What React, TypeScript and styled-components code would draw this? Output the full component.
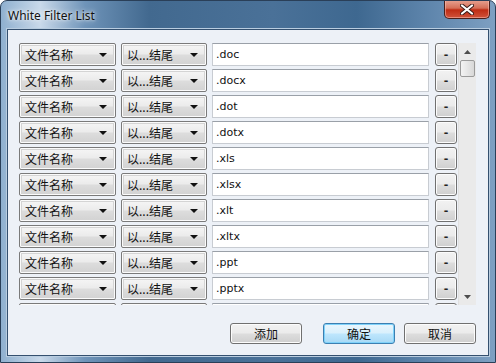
import styled, { createGlobalStyle } from "styled-components";

const GlobalStyle = createGlobalStyle`
  html, body {
    margin: 0;
    padding: 0;
    background: #ffffff;
  }
  body {
    font-family: "Noto Sans", "Noto Sans CJK SC", sans-serif;
  }
`;

const extensions = [".doc", ".docx", ".dot", ".dotx", ".xls", ".xlsx", ".xlt", ".xltx", ".ppt", ".pptx"];

const App = () => {
  return (
    <>
      <GlobalStyle />
      <Window>
        <TitleBar>
          <Title>White Filter List</Title>
          <CloseButton>
            <svg width="14" height="11" viewBox="0 0 14 11">
              <path d="M2 1.5 L12 9.5 M12 1.5 L2 9.5" stroke="#3a1b18" strokeWidth="4" strokeLinecap="round" />
              <path d="M2 1.5 L12 9.5 M12 1.5 L2 9.5" stroke="#ffffff" strokeWidth="2.2" strokeLinecap="round" />
            </svg>
          </CloseButton>
        </TitleBar>
        <Client>
          <ListPanel>
            <Rows>
              {extensions.map((ext, i) => (
                <Row key={i}>
                  <Combo $width={97}>
                    <ComboText>文件名称</ComboText>
                    <Arrow />
                  </Combo>
                  <Combo $width={86}>
                    <ComboText>以...结尾</ComboText>
                    <Arrow />
                  </Combo>
                  <TextBox>{ext}</TextBox>
                  <MinusButton>-</MinusButton>
                </Row>
              ))}
              {/* next row, scrolled out of view except its top edge */}
              <Row>
                <Combo $width={97}>
                  <ComboText />
                </Combo>
                <Combo $width={86}>
                  <ComboText />
                </Combo>
                <TextBox />
                <MinusButton />
              </Row>
            </Rows>
            <ScrollBar>
              <ScrollArrow>
                <svg width="7" height="4" viewBox="0 0 7 4">
                  <path d="M0 4 L3.5 0 L7 4 Z" fill="#4d4d4d" />
                </svg>
              </ScrollArrow>
              <Thumb />
              <Track />
              <ScrollArrow>
                <svg width="7" height="4" viewBox="0 0 7 4">
                  <path d="M0 0 L3.5 4 L7 0 Z" fill="#4d4d4d" />
                </svg>
              </ScrollArrow>
            </ScrollBar>
          </ListPanel>
          <Footer>
            <DialogButton $spaced>添加</DialogButton>
            <DialogButton $primary>确定</DialogButton>
            <DialogButton>取消</DialogButton>
          </Footer>
        </Client>
      </Window>
    </>
  );
};

export default App;

const Window = styled.div`
  width: 496px;
  height: 363px;
  box-sizing: border-box;
  display: flex;
  flex-direction: column;
  border-radius: 7px 7px 0 0;
  border: 1px solid #2a3f58;
  background: linear-gradient(
    90deg,
    #8fb0cf 0%,
    #c9d9ea 8%,
    #6f94b9 17%,
    #42698f 30%,
    #4a7198 55%,
    #3e6890 72%,
    #5d84ab 86%,
    #7ea0c2 100%
  );
  overflow: hidden;
`;

const TitleBar = styled.div`
  height: 28px;
  display: flex;
  align-items: flex-start;
  justify-content: space-between;
  padding: 0 5px 0 7px;
`;

const Title = styled.div`
  margin-top: 6px;
  font-family: "Noto Sans", "DejaVu Sans", sans-serif;
  font-size: 12px;
  color: #111;
  text-shadow: 0 0 6px rgba(255, 255, 255, 0.9), 0 0 3px rgba(255, 255, 255, 0.9);
`;

const CloseButton = styled.div`
  width: 46px;
  height: 19px;
  margin-top: -1px;
  box-sizing: border-box;
  border: 1px solid #4a1f1a;
  border-top: none;
  border-radius: 0 0 5px 5px;
  background: linear-gradient(180deg, #e8a493 0%, #d56f58 45%, #bf2c14 55%, #d0533b 100%);
  box-shadow: inset 0 0 0 1px rgba(255, 200, 190, 0.5);
  display: flex;
  align-items: center;
  justify-content: center;
`;

const Client = styled.div`
  flex: 1;
  margin: 0 6px 6px 6px;
  border: 1px solid #34506f;
  background: #edf1f7;
  display: flex;
  flex-direction: column;
  padding: 13px 12px 0 11px;
  box-shadow: 0 0 0 1px #b9cde0;
`;

const ListPanel = styled.div`
  height: 262px;
  display: flex;
  overflow: hidden;
`;

const Rows = styled.div`
  flex: 1;
  display: flex;
  flex-direction: column;
  gap: 3px;
  overflow: hidden;
`;

const Row = styled.div`
  display: flex;
  align-items: center;
  flex-shrink: 0;
  height: 23px;
`;

const Combo = styled.div<{ $width: number }>`
  width: ${(p) => p.$width}px;
  height: 23px;
  box-sizing: border-box;
  margin-right: 5px;
  border: 1px solid #7a7a7a;
  border-radius: 2px;
  padding: 1px;
  background: #fbfbfb;
  display: flex;
`;

const ComboText = styled.div`
  flex: 1;
  display: flex;
  align-items: center;
  padding-left: 3px;
  font-family: "Noto Sans CJK SC", sans-serif;
  font-size: 12px;
  color: #111;
  border: 1px solid #d4d4d4;
  background: linear-gradient(180deg, #f4f4f4 0%, #ebebeb 48%, #dddddd 52%, #d4d4d4 100%);
`;

const Arrow = styled.div`
  position: relative;
  width: 0;
  &::after {
    content: "";
    position: absolute;
    right: 7px;
    top: 8px;
    border-left: 4px solid transparent;
    border-right: 4px solid transparent;
    border-top: 4px solid #111;
  }
`;

const TextBox = styled.div`
  width: 217px;
  height: 23px;
  box-sizing: border-box;
  border: 1px solid #c8ccd2;
  border-top-color: #9aa0a8;
  background: #fff;
  padding-left: 3px;
  display: flex;
  align-items: center;
  font-family: "DejaVu Sans", sans-serif;
  font-size: 11px;
  color: #111;
`;

const MinusButton = styled.div`
  width: 22px;
  height: 23px;
  box-sizing: border-box;
  margin-left: 6px;
  border: 1px solid #707070;
  border-radius: 3px;
  background: linear-gradient(180deg, #f2f2f2 0%, #ebebeb 48%, #dddddd 52%, #cfcfcf 100%);
  box-shadow: inset 0 0 0 1px #fcfcfc;
  display: flex;
  align-items: center;
  justify-content: center;
  font-family: "DejaVu Sans", sans-serif;
  font-size: 11px;
  font-weight: bold;
  color: #222;
`;

const ScrollBar = styled.div`
  width: 17px;
  flex-shrink: 0;
  display: flex;
  flex-direction: column;
  background: #eaeaea;
  border-left: 1px solid #e0e0e0;
  margin-left: 1px;
`;

const ScrollArrow = styled.div`
  height: 17px;
  display: flex;
  align-items: center;
  justify-content: center;
`;

const Thumb = styled.div`
  height: 15px;
  margin: 0 1px;
  border: 1px solid #9a9a9a;
  border-radius: 2px;
  background: linear-gradient(90deg, #f3f3f3 0%, #e6e6e6 50%, #d8d8d8 100%);
`;

const Track = styled.div`
  flex: 1;
`;

const Footer = styled.div`
  display: flex;
  justify-content: flex-end;
  gap: 9px;
  margin-top: 18px;
`;

const DialogButton = styled.div<{ $primary?: boolean; $spaced?: boolean }>`
  width: 72px;
  height: 21px;
  box-sizing: border-box;
  margin-right: ${(p) => (p.$spaced ? "12px" : "0")};
  border: 1px solid ${(p) => (p.$primary ? "#3c7fb1" : "#707070")};
  border-radius: 3px;
  background: ${(p) =>
    p.$primary
      ? "linear-gradient(180deg, #eaf6fd 0%, #d9f0fc 48%, #bee6fd 52%, #a7d9f5 100%)"
      : "linear-gradient(180deg, #f2f2f2 0%, #ebebeb 48%, #dddddd 52%, #cfcfcf 100%)"};
  box-shadow: inset 0 0 0 1px ${(p) => (p.$primary ? "#7fd2fa" : "#fcfcfc")};
  display: flex;
  align-items: center;
  justify-content: center;
  font-family: "Noto Sans CJK SC", sans-serif;
  font-size: 12px;
  color: #111;
`;
